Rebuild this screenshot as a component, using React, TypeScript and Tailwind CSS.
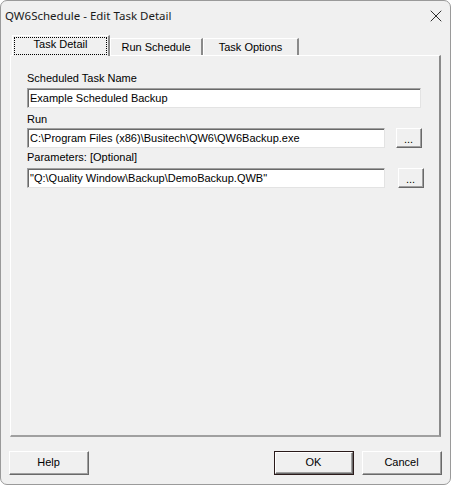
import React from 'react';
import { X } from 'lucide-react';

const ui = "font-['Liberation_Sans',Arial,sans-serif] text-[11px] text-black";

// classic raised 3D button edge
const Raised: React.FC<{ className?: string; children: React.ReactNode; isDefault?: boolean }> = ({ className = '', children, isDefault }) => (
  <div className={`${isDefault ? 'border border-[#2a1a1a]' : ''} ${className}`}>
    <div className="h-full w-full border-t border-l border-white border-r border-b border-r-[#696969] border-b-[#696969]">
      <div className="h-full w-full flex items-center justify-center bg-[#f0f0f0] border-r border-b border-r-[#a0a0a0] border-b-[#a0a0a0]">
        {children}
      </div>
    </div>
  </div>
);

const Field: React.FC<{ value: string; className?: string }> = ({ value, className = '' }) => (
  <div className={`h-[20px] bg-white border-t border-l border-[#a0a0a0] border-r border-b border-r-[#e3e3e3] border-b-[#e3e3e3] ${className}`}>
    <div className="h-full border-t border-l border-[#696969] flex items-center pl-[1px] whitespace-nowrap overflow-hidden">
      {value}
    </div>
  </div>
);

const Tab: React.FC<{ label: string; active?: boolean; width: string }> = ({ label, active, width }) =>
  active ? (
    <div className={`${width} h-[21px] -mb-[1px] relative z-10 bg-[#f0f0f0] border-t border-l border-white border-r-2 border-r-[#8a8a8a] p-[1px]`}>
      <div className="h-full w-full border border-dotted border-black flex items-center justify-center pb-[3px]">{label}</div>
    </div>
  ) : (
    <div className={`${width} h-[17px] self-end bg-[#f0f0f0] border-t border-l border-white border-r-2 border-r-[#8a8a8a] flex items-center justify-center`}>
      {label}
    </div>
  );

export default function App() {
  return (
    <div className={`w-[451px] h-[485px] bg-[#f0f0f0] border border-[#9a9a9a] rounded-[7px] overflow-hidden flex flex-col ${ui}`}>
      <div className="h-[29px] flex items-center justify-between pl-[4px] pr-[4px] shrink-0">
        <span className="font-['Noto_Sans',sans-serif] text-[11.5px] text-[#1a1a1a]">QW6Schedule - Edit Task Detail</span>
        <X size={20} strokeWidth={1.1} className="text-[#1a1a1a]" />
      </div>

      <div className="mt-[5px] ml-[11px] flex items-end h-[20px]">
        <Tab label="Task Detail" active width="w-[98px]" />
        <Tab label="Run Schedule" width="w-[93px]" />
        <Tab label="Task Options" width="w-[96px]" />
      </div>

      <div className="ml-[9px] w-[431px] h-[382px] border-t border-l border-white border-r-2 border-b-2 border-r-[#8a8a8a] border-b-[#a0a0a0] pt-[15px] pl-[16px]">
        <div className="leading-[14px]">Scheduled Task Name</div>
        <Field value="Example Scheduled Backup" className="mt-[3px] w-[394px]" />
        <div className="leading-[14px] mt-[4px]">Run</div>
        <div className="flex items-center mt-[2px]">
          <Field value="C:\Program Files (x86)\Busitech\QW6\QW6Backup.exe" className="w-[358px]" />
          <Raised className="ml-[11px] w-[26px] h-[20px]"><span className="leading-none pt-[4px]">...</span></Raised>
        </div>
        <div className="leading-[14px] mt-[2px]">Parameters: [Optional]</div>
        <div className="flex items-center mt-[4px]">
          <Field value={'"Q:\\Quality Window\\Backup\\DemoBackup.QWB"'} className="w-[358px]" />
          <Raised className="ml-[13px] w-[26px] h-[20px]"><span className="leading-none pt-[4px]">...</span></Raised>
        </div>
      </div>

      <div className="mt-[14px] px-[8px] flex items-center">
        <Raised className="w-[80px] h-[24px]"><span>Help</span></Raised>
        <div className="flex-1" />
        <Raised isDefault className="w-[80px] h-[24px]"><span>OK</span></Raised>
        <Raised className="ml-[8px] w-[80px] h-[24px]"><span>Cancel</span></Raised>
      </div>
    </div>
  );
}
